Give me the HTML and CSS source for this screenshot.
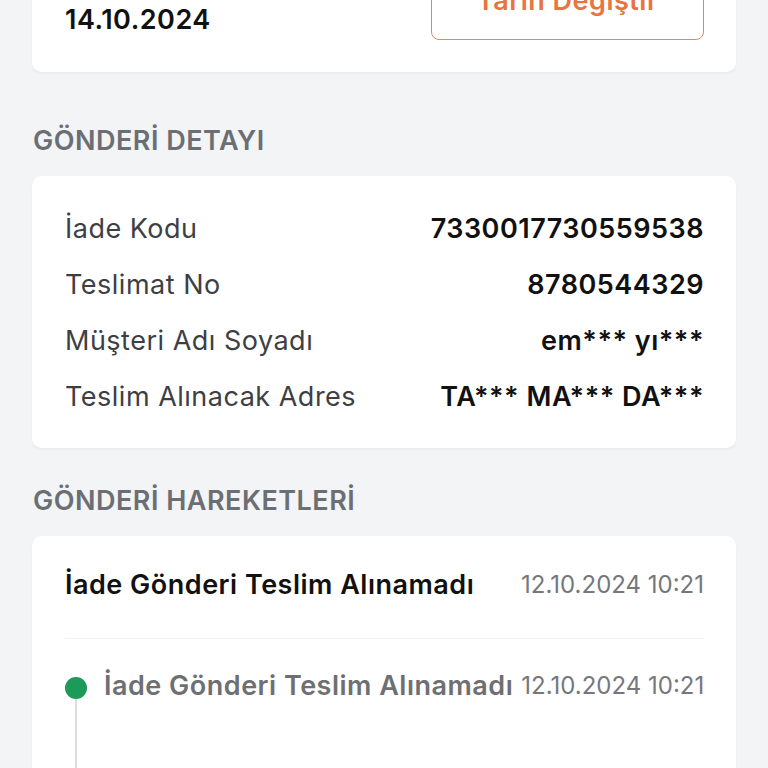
FILE: index.html
```html
<!DOCTYPE html>
<html lang="tr">
<head>
<meta charset="utf-8">
<title>Gönderi Detayı</title>
<link rel="stylesheet" href="styles.css">
</head>
<body>
<main class="page">
  <section class="card date-card">
    <div class="date-col">
      <span class="date-label">Teslim Tarihi</span>
      <span class="date-value">14.10.2024</span>
    </div>
    <button class="btn-outline">Tarih Değiştir</button>
  </section>

  <h2 class="section-title first">GÖNDERİ DETAYI</h2>
  <section class="card detail-card">
    <div class="row"><span class="label">İade Kodu</span><span class="value">7330017730559538</span></div>
    <div class="row"><span class="label">Teslimat No</span><span class="value">8780544329</span></div>
    <div class="row"><span class="label">Müşteri Adı Soyadı</span><span class="value">em*** yı***</span></div>
    <div class="row"><span class="label">Teslim Alınacak Adres</span><span class="value">TA*** MA*** DA***</span></div>
  </section>

  <h2 class="section-title">GÖNDERİ HAREKETLERİ</h2>
  <section class="card moves-card">
    <div class="moves-head">
      <span class="moves-title">İade Gönderi Teslim Alınamadı</span>
      <span class="moves-date">12.10.2024 10:21</span>
    </div>
    <div class="timeline">
      <div class="tl-item">
        <div class="tl-marker"><span class="tl-dot"></span><span class="tl-line"></span></div>
        <div class="tl-body">
          <span class="tl-title">İade Gönderi Teslim Alınamadı</span>
          <span class="moves-date">12.10.2024 10:21</span>
        </div>
      </div>
    </div>
  </section>
</main>
</body>
</html>
```

FILE: styles.css
```css
* { box-sizing: border-box; }
html, body { margin: 0; padding: 0; }
body {
  background: #f3f4f6;
  font-family: Inter, "Noto Sans", sans-serif;
  color: #111;
  overflow: hidden;
}
.page {
  padding: 0 32px 40px;
  margin-top: -68px;
}
.card {
  background: #fff;
  border-radius: 10px;
  box-shadow: 0 2px 3px rgba(0,0,0,0.04);
}
.date-card {
  display: flex;
  justify-content: space-between;
  align-items: flex-end;
  padding: 32px 32px 32px 33px;
}
.date-col {
  display: flex;
  flex-direction: column;
  padding-bottom: 3px;
}
.date-label { font-size: 24px; line-height: 34px; color: #555; }
.date-value {
  font-size: 27px;
  letter-spacing: 0.5px;
  line-height: 34px;
  font-weight: 600;
  color: #111;
}
.btn-outline {
  width: 273px;
  height: 76px;
  background: #fff;
  border: 1.5px solid #d98a68;
  border-radius: 8px;
  color: #e8743f;
  font-family: Inter, sans-serif;
  font-size: 27px;
  letter-spacing: 0.5px;
  font-weight: 600;
  padding: 0 0 3px;
}
.section-title {
  margin: 36px 0 18px 1px;
  font-size: 27px;
  letter-spacing: 0.5px;
  line-height: 34px;
  font-weight: 600;
  color: #6b6e73;
}
.section-title.first { margin-top: 52px; }
.detail-card {
  padding: 36px 32px 34px 33px;
  display: flex;
  flex-direction: column;
  gap: 22px;
}
.row {
  display: flex;
  justify-content: space-between;
  align-items: center;
  line-height: 34px;
  font-size: 27px;
  letter-spacing: 0.5px;
}
.label { color: #3d3f44; }
.value { font-weight: 600; color: #111; }
.moves-card {
  padding: 32px 32px 0 33px;
  height: 400px;
}
.moves-head {
  display: flex;
  justify-content: space-between;
  align-items: center;
  padding-bottom: 36px;
  border-bottom: 1.5px solid #f2f2f4;
}
.moves-title {
  font-size: 27px;
  letter-spacing: 0.5px;
  line-height: 34px;
  font-weight: 600;
  color: #111;
}
.moves-date {
  font-size: 24px;
  line-height: 34px;
  color: #75777c;
  white-space: nowrap;
}
.timeline { padding-top: 30px; }
.tl-item {
  display: flex;
  gap: 17px;
}
.tl-marker {
  width: 22px;
  display: flex;
  flex-direction: column;
  align-items: center;
  padding-top: 8px;
}
.tl-dot {
  width: 22px;
  height: 22px;
  border-radius: 50%;
  background: #1c9a59;
  flex: none;
}
.tl-line {
  width: 2px;
  height: 200px;
  background: #dcdcdf;
}
.tl-body {
  flex: 1;
  display: flex;
  justify-content: space-between;
  align-items: center;
  align-self: flex-start;
  gap: 8px;
}
.tl-title {
  font-size: 27px;
  letter-spacing: 0.5px;
  line-height: 34px;
  font-weight: 600;
  color: #6e6f73;
  white-space: nowrap;
}
```
